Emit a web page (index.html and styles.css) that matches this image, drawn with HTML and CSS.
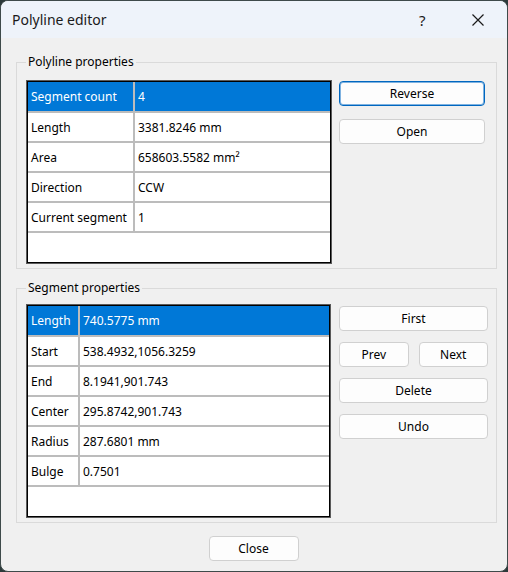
FILE: index.html
```html
<!DOCTYPE html>
<html lang="en">
<head>
<meta charset="utf-8">
<title>Polyline editor</title>
<link rel="stylesheet" href="styles.css">
</head>
<body>
<div class="window">
  <div class="titlebar">
    <span class="title">Polyline editor</span>
    <span class="help">?</span>
    <span class="close-x">
      <svg width="12" height="12" viewBox="0 0 12 12"><path d="M0.5 0.5 L11.5 11.5 M11.5 0.5 L0.5 11.5" stroke="#1a1a1a" stroke-width="1.2" fill="none"/></svg>
    </span>
  </div>
  <div class="content">
    <fieldset class="group group-poly">
      <legend>Polyline properties</legend>
      <div class="group-body">
        <div class="grid grid-poly">
          <table>
            <tr class="sel"><td class="k">Segment count</td><td>4</td></tr>
            <tr><td class="k">Length</td><td>3381.8246 mm</td></tr>
            <tr><td class="k">Area</td><td>658603.5582 mm²</td></tr>
            <tr><td class="k">Direction</td><td>CCW</td></tr>
            <tr><td class="k">Current segment</td><td>1</td></tr>
          </table>
        </div>
        <div class="buttons buttons-poly">
          <button class="btn default">Reverse</button>
          <button class="btn">Open</button>
        </div>
      </div>
    </fieldset>
    <fieldset class="group group-seg">
      <legend>Segment properties</legend>
      <div class="group-body">
        <div class="grid grid-seg">
          <table>
            <tr class="sel"><td class="k">Length</td><td>740.5775 mm</td></tr>
            <tr><td class="k">Start</td><td>538.4932,1056.3259</td></tr>
            <tr><td class="k">End</td><td>8.1941,901.743</td></tr>
            <tr><td class="k">Center</td><td>295.8742,901.743</td></tr>
            <tr><td class="k">Radius</td><td>287.6801 mm</td></tr>
            <tr><td class="k">Bulge</td><td>0.7501</td></tr>
          </table>
        </div>
        <div class="buttons buttons-seg">
          <button class="btn">First</button>
          <div class="pair">
            <button class="btn">Prev</button>
            <button class="btn">Next</button>
          </div>
          <button class="btn">Delete</button>
          <button class="btn">Undo</button>
        </div>
      </div>
    </fieldset>
    <div class="footer">
      <button class="btn close-btn">Close</button>
    </div>
  </div>
</div>
</body>
</html>
```

FILE: styles.css
```css
* { box-sizing: border-box; }

html, body {
  margin: 0;
  padding: 0;
  background: #2c3a3a;
}

body {
  width: 508px;
  height: 572px;
  font-family: "Noto Sans", "Open Sans", sans-serif;
  font-size: 12px;
  color: #000;
}

.window {
  width: 508px;
  height: 572px;
  background: #f0f0f0;
  border: 1px solid #3e4a4a;
  border-radius: 8px;
  overflow: hidden;
  display: flex;
  flex-direction: column;
}

/* ---- title bar ---- */
.titlebar {
  height: 37px;
  flex: none;
  background: #eef3fa;
  display: flex;
  align-items: center;
  padding-left: 11px;
}

.title {
  font-size: 14px;
  color: #1a1a1a;
  flex: 1;
}

.help {
  font-size: 15px;
  color: #1a1a1a;
  width: 14px;
  margin-right: 39px;
}

.close-x {
  display: flex;
  width: 12px;
  height: 12px;
  margin-right: 23px;
}

/* ---- content ---- */
.content {
  flex: 1;
  display: flex;
  flex-direction: column;
  padding: 16px 10px 0 15px;
}

.group {
  margin: 0;
  border: 1px solid #dadada;
  padding: 0 11px 4px 9px;
  min-width: 0;
}

.group legend {
  padding: 0 2px;
  line-height: 16px;
  font-size: 12px;
}

.group-seg {
  margin-top: 11px;
  padding-right: 9px;
}

.group-body {
  display: flex;
  align-items: flex-start;
  gap: 7px;
}

.group-seg .group-body { gap: 8px; }

.group-poly .group-body { padding-top: 10px; }
.group-seg .group-body { padding-top: 8px; }

/* ---- property grids ---- */
.grid {
  flex: none;
  background: #fff;
  border: 1px solid #5a5a5a;
  box-shadow: inset 0 0 0 1px #000;
  padding: 1px;
}

.grid-poly { width: 306px; height: 184px; }
.grid-seg { width: 305px; height: 214px; }

.grid table {
  width: 100%;
  border-collapse: collapse;
}

.grid td {
  height: 30px;
  padding: 0 0 0 3px;
  border-bottom: 2px solid #bcbcbc;
  white-space: nowrap;
  vertical-align: middle;
}

.grid td.k {
  border-right: 2px solid #bcbcbc;
}

.grid-poly td.k { width: 106px; }
.grid-seg td.k { width: 51px; }

.grid tr.sel td {
  background: #0078d7;
  color: #fff;
}

/* ---- buttons ---- */
.btn {
  font-family: inherit;
  font-size: 12px;
  color: #000;
  background: #fdfdfd;
  border: 1px solid #d0d0d0;
  border-radius: 4px;
  height: 25px;
  padding: 0;
  line-height: 1;
}

.btn.default {
  border: 1px solid #0067c0;
  box-shadow: inset 0 0 0 1px #7fb2e0;
}

.buttons {
  display: flex;
  flex-direction: column;
  flex: none;
}

.buttons-poly {
  width: 146px;
  padding-top: 1px;
  gap: 13px;
}

.buttons-seg {
  width: 149px;
  padding-top: 2px;
  gap: 11px;
}

.pair {
  display: flex;
  gap: 10px;
}

.pair .btn { flex: 1; }

.footer {
  display: flex;
  justify-content: center;
  padding-top: 13px;
}

.close-btn {
  width: 90px;
  margin-right: 6px;
}
```
